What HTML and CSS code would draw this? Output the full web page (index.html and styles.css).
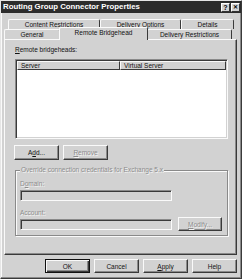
FILE: index.html
```html
<!DOCTYPE html>
<html lang="en">
<head>
  <meta charset="UTF-8" />
  <title>Routing Group Connector Properties</title>
  <link rel="stylesheet" href="styles.css">
</head>
<body>
  <div class="window">
    <div class="titlebar">
      <span class="title">Routing Group Connector Properties</span>
      <span class="tbtn">?</span>
      <span class="tbtn close">&#x2715;</span>
    </div>

    <div class="content">
      <div class="tabrow back">
        <div class="tab w-content">Content Restrictions</div>
        <div class="tab w-options">Delivery Options</div>
        <div class="tab w-details">Details</div>
      </div>
      <div class="tabrow front">
        <div class="tab w-general">General</div>
        <div class="tab active w-remote">Remote Bridgehead</div>
        <div class="tab w-restr">Delivery Restrictions</div>
      </div>

      <div class="panel">
        <div class="label"><u>R</u>emote bridgeheads:</div>
        <div class="listbox">
          <div class="listhead">
            <div class="col col-server">Server</div>
            <div class="col col-virtual">Virtual Server</div>
          </div>
        </div>

        <div class="btnrow">
          <button class="btn">A<u>d</u>d...</button>
          <button class="btn disabled"><u>R</u>emove</button>
        </div>

        <div class="group">
          <span class="legend">Override connection credentials for Exchange 5.x</span>
          <div class="field-label disabled-text">D<u>o</u>main:</div>
          <div class="textbox"></div>
          <div class="field-label disabled-text acc">Account:</div>
          <div class="fieldrow">
            <div class="textbox"></div>
            <button class="btn disabled modify"><u>M</u>odify...</button>
          </div>
        </div>
      </div>

      <div class="footer">
        <button class="btn default">OK</button>
        <button class="btn">Cancel</button>
        <button class="btn"><u>A</u>pply</button>
        <button class="btn">Help</button>
      </div>
    </div>
  </div>
</body>
</html>
```

FILE: styles.css
```css
body {
  margin: 0;
  background: #d2d2d2;
  font-family: 'Liberation Sans', Arial, sans-serif;
  font-size: 6.5px;
  color: #111;
}
.window {
  box-sizing: border-box;
  width: 242px;
  height: 279px;
  border: 1px solid;
  border-color: #e6e6e6 #3a3a3a #3a3a3a #e6e6e6;
  box-shadow: inset -1px -1px 0 #8a8a8a, inset 1px 1px 0 #fafafa;
  background: #d2d2d2;
}
.titlebar {
  height: 12px;
  background: #2c2c2c;
  display: flex;
  align-items: center;
  padding: 0 1px 0 2px;
}
.title {
  flex: 1;
  color: #fff;
  font-weight: bold;
  font-size: 7.8px;
  line-height: 12px;
}
.tbtn {
  box-sizing: border-box;
  width: 9px;
  height: 9px;
  margin-left: 1px;
  background: #d2d2d2;
  border: 1px solid;
  border-color: #fff #333 #333 #fff;
  font-size: 7px;
  font-weight: bold;
  line-height: 7px;
  text-align: center;
  color: #000;
}
.tbtn.close {
  font-size: 6px;
}
.content {
  padding: 6px 0 0 3px;
}
.tabrow {
  display: flex;
  height: 10px;
  align-items: flex-end;
}
.tabrow.back {
  padding-left: 4px;
}
.tab {
  box-sizing: border-box;
  height: 10px;
  border: 1px solid;
  border-bottom: none;
  border-color: #fafafa #3a3a3a #3a3a3a #fafafa;
  border-radius: 2px 2px 0 0;
  text-align: center;
  line-height: 9px;
  background: #d2d2d2;
}
.tab.active {
  height: 13px;
  margin-bottom: -1px;
  margin-left: -1px;
  margin-right: -1px;
  z-index: 1;
  line-height: 10px;
}
.w-content { width: 92px; }
.w-options { width: 81px; }
.w-details { width: 53px; }
.w-general { width: 56px; }
.w-remote { width: 89px; }
.w-restr { width: 85px; }

.panel {
  box-sizing: border-box;
  width: 233px;
  height: 216px;
  border: 1px solid;
  border-color: #fafafa #3a3a3a #3a3a3a #fafafa;
  box-shadow: inset -1px -1px 0 #8a8a8a;
  padding: 6px 0 0 10px;
}
.label {
  line-height: 8px;
  height: 8px;
}
.listbox {
  box-sizing: border-box;
  margin-top: 5px;
  width: 213px;
  height: 80px;
  background: #fff;
  border: 1px solid;
  border-color: #8a8a8a #fafafa #fafafa #8a8a8a;
  box-shadow: inset 1px 1px 0 #3a3a3a, inset -1px -1px 0 #d2d2d2;
  padding: 1px;
}
.listhead {
  display: flex;
  height: 9px;
}
.col {
  box-sizing: border-box;
  height: 9px;
  background: #d2d2d2;
  border: 1px solid;
  border-color: #fafafa #3a3a3a #3a3a3a #fafafa;
  line-height: 7px;
  padding-left: 3px;
}
.col-server { width: 103px; }
.col-virtual { flex: 1; }

.btnrow {
  display: flex;
  gap: 4px;
  margin: 6px 0 0 -1px;
}
.btn {
  box-sizing: border-box;
  width: 45px;
  height: 15px;
  padding: 0;
  background: #d2d2d2;
  border: 1px solid;
  border-color: #fafafa #3a3a3a #3a3a3a #fafafa;
  box-shadow: inset -1px -1px 0 #8a8a8a;
  font-family: inherit;
  font-size: 6.5px;
  color: #111;
}
.btn.disabled,
.disabled-text,
.legend {
  color: #8c8c8c;
  text-shadow: 1px 1px 0 #f4f4f4;
}
.group {
  box-sizing: border-box;
  width: 213px;
  height: 66px;
  margin-top: 10px;
  border: 1px solid #8a8a8a;
  box-shadow: 1px 1px 0 #fafafa, inset 1px 1px 0 #fafafa;
  padding: 0 0 0 4px;
}
.legend {
  display: inline-block;
  margin: -5px 0 0 0;
  padding: 0 1px;
  line-height: 8px;
  background: #d2d2d2;
  vertical-align: top;
}
.field-label {
  line-height: 8px;
  margin-top: 2px;
}
.field-label.acc {
  margin-top: 8px;
}
.textbox {
  box-sizing: border-box;
  width: 152px;
  height: 11px;
  margin-top: 2px;
  border: 1px solid;
  border-color: #8a8a8a #fafafa #fafafa #8a8a8a;
  box-shadow: inset 1px 1px 0 #3a3a3a, inset -1px -1px 0 #d2d2d2;
}
.fieldrow {
  display: flex;
  align-items: flex-start;
}
.btn.modify {
  width: 44px;
  height: 14px;
  margin-left: 6px;
}
.footer {
  display: flex;
  justify-content: flex-end;
  gap: 4px;
  width: 233px;
  margin-top: 4px;
}
.footer .btn {
  width: 45px;
  height: 14px;
}
.btn.default {
  border-color: #111;
  box-shadow: inset 1px 1px 0 #fafafa, inset -1px -1px 0 #3a3a3a, inset -2px -2px 0 #8a8a8a;
}
```
